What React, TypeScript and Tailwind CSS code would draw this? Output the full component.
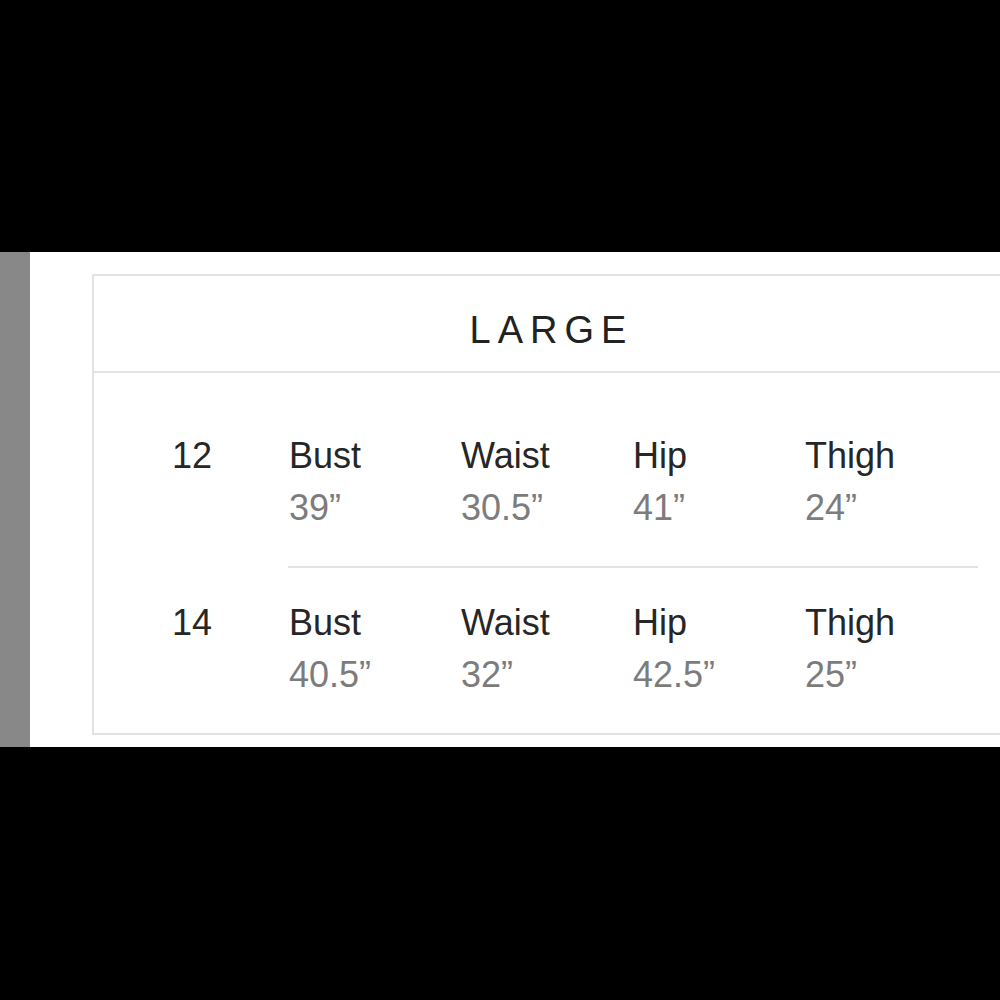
const rows = [
  { size: "12", values: ["39\u201D", "30.5\u201D", "41\u201D", "24\u201D"] },
  { size: "14", values: ["40.5\u201D", "32\u201D", "42.5\u201D", "25\u201D"] },
];

const labels = ["Bust", "Waist", "Hip", "Thigh"];

export default function App() {
  return (
    <div className="flex h-[1000px] w-[1000px] flex-col overflow-hidden bg-black font-['Liberation_Sans',Arial,sans-serif]">
      <div className="h-[252px] shrink-0" />
      <div className="flex h-[495px] shrink-0">
        <div className="w-[30px] shrink-0 bg-[#888888]" />
        <div className="flex-1 overflow-hidden bg-white pl-[62px] pt-[22px]">
          <div className="w-[912px] border-2 border-[#e3e3e3]">
            <div className="flex h-[97px] items-center justify-center border-b-2 border-[#e3e3e3] pl-[7px] pt-[13px] text-[38px] tracking-[7px] text-[#222222]">
              LARGE
            </div>
            {rows.map((r, i) => (
              <div key={r.size} className={i === 0 ? "pt-[57px]" : "pt-[29px]"}>
                <div className="flex pl-[78px] text-[36px] leading-[52px]">
                  <div className="w-[117px] text-[#262626]">{r.size}</div>
                  {labels.map((l, j) => (
                    <div key={l} className="w-[172px]">
                      <div className="text-[#262626]">{l}</div>
                      <div className="text-[#7c7c7c]">{r.values[j]}</div>
                    </div>
                  ))}
                </div>
                {i === 0 ? (
                  <div className="ml-[194px] mr-[24px] mt-[32px] h-[2px] bg-[#e3e3e3]" />
                ) : (
                  <div className="h-[32px]" />
                )}
              </div>
            ))}
          </div>
        </div>
      </div>
    </div>
  );
}
